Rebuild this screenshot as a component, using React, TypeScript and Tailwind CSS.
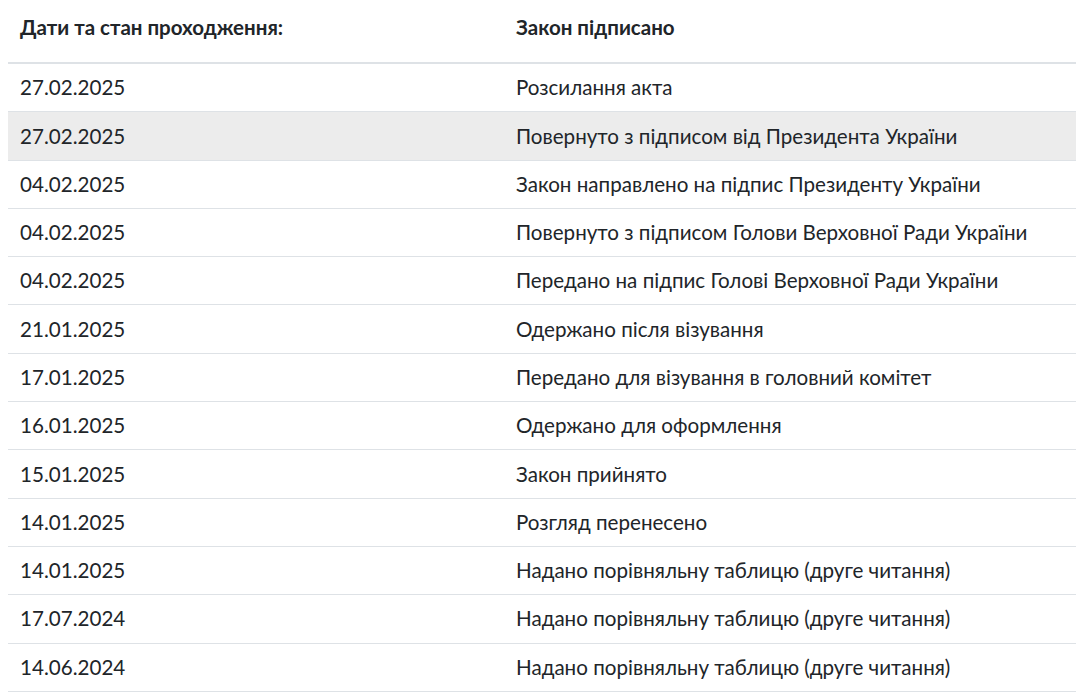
const rows: [string, string][] = [
  ["27.02.2025", "Розсилання акта"],
  ["27.02.2025", "Повернуто з підписом від Президента України"],
  ["04.02.2025", "Закон направлено на підпис Президенту України"],
  ["04.02.2025", "Повернуто з підписом Голови Верховної Ради України"],
  ["04.02.2025", "Передано на підпис Голові Верховної Ради України"],
  ["21.01.2025", "Одержано після візування"],
  ["17.01.2025", "Передано для візування в головний комітет"],
  ["16.01.2025", "Одержано для оформлення"],
  ["15.01.2025", "Закон прийнято"],
  ["14.01.2025", "Розгляд перенесено"],
  ["14.01.2025", "Надано порівняльну таблицю (друге читання)"],
  ["17.07.2024", "Надано порівняльну таблицю (друге читання)"],
  ["14.06.2024", "Надано порівняльну таблицю (друге читання)"],
];

export default function App() {
  return (
    <div className="bg-white pl-2 w-[1076px] h-[695px] overflow-hidden text-[#212529]" style={{ fontFamily: "Lato, 'Noto Sans', sans-serif" }}>
      <div className="flex h-[64px] items-start pt-[12px] border-b-2 border-[#dee2e6] text-[20.5px] font-bold">
        <div className="w-[508px] pl-3">Дати та стан проходження:</div>
        <div>Закон підписано</div>
      </div>
      {rows.map(([d, t], i) => (
        <div key={i} className={`flex h-[48.3px] items-center border-b border-[#dee2e6] text-[20.6px] ${i === 1 ? "bg-[#ececec]" : ""}`}>
          <div className="w-[508px] pl-3">{d}</div>
          <div className="whitespace-nowrap">{t}</div>
        </div>
      ))}
    </div>
  );
}
